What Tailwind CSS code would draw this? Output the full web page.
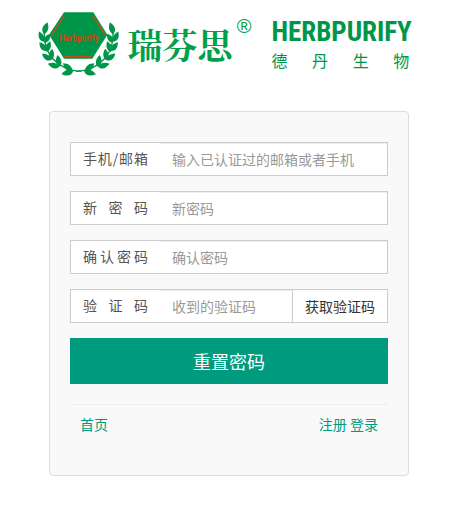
<!DOCTYPE html>
<html lang="zh-CN">
<head>
<meta charset="utf-8">
<meta name="viewport" content="width=device-width, initial-scale=1">
<title>重置密码</title>
<script src="https://cdn.jsdelivr.net/npm/@tailwindcss/browser@4"></script>
</head>
<body class="bg-white font-['Noto_Sans_CJK_SC',sans-serif] text-sm text-[#555]">
<header class="flex items-start justify-center pt-2 pr-1">
  <svg class="h-[68px] w-[82px] shrink-0" viewBox="27 25 246 204" role="img" aria-label="Herbpurify">
    <defs>
      <path id="leaf" d="M0 0C-12-9-11-20 0-34C9-22 10-9 0 0Z"/>
      <g id="branch">
        <path d="M46 98C42 160 85 212 157 215" fill="none" stroke="#00964a" stroke-width="4"/>
        <use href="#leaf" transform="translate(45 104) rotate(16) scale(1.1)"/>
        <use href="#leaf" transform="translate(45 126) rotate(-26)"/>
        <use href="#leaf" transform="translate(47 130) rotate(32) scale(.95)"/>
        <use href="#leaf" transform="translate(53 154) rotate(-40)"/>
        <use href="#leaf" transform="translate(53 157) rotate(18)"/>
        <use href="#leaf" transform="translate(67 181) rotate(-56)"/>
        <use href="#leaf" transform="translate(67 181) rotate(4)"/>
        <use href="#leaf" transform="translate(91 201) rotate(-76) scale(1.05)"/>
        <use href="#leaf" transform="translate(93 201) rotate(-12) scale(1.05)"/>
        <use href="#leaf" transform="translate(133 213) rotate(-107) scale(1.1)"/>
        <use href="#leaf" transform="translate(130 213) rotate(-52) scale(1.05)"/>
      </g>
    </defs>
    <g fill="#00964a">
      <use href="#branch"/>
      <use href="#branch" transform="translate(298 0) scale(-1 1)"/>
      <path d="M105 38H193L235 105L190 177H105L60 105Z"/>
    </g>
    <path d="M106 47L67 108M190 47L229 106M106 170H189" fill="none" stroke="#cf4a12" stroke-width="4"/>
    <text x="150" y="125" text-anchor="middle" fill="#b8501a" font-family="'Roboto Condensed','Liberation Sans Narrow','Liberation Sans',sans-serif" font-weight="700" font-size="28">Herbpurify</text>
  </svg>
  <div class="ml-2 flex items-start text-[#00a04a]">
    <span class="pt-5 font-['Noto_Serif_CJK_SC','Noto_Sans_CJK_SC',serif] text-[35px] leading-8 font-bold">瑞芬思</span>
    <span class="pt-2 pl-1 font-['Liberation_Sans',sans-serif] text-xl leading-5">®</span>
  </div>
  <div class="ml-5 w-[138px] pt-2 text-[#00964a]">
    <div class="font-['Liberation_Sans_Narrow','Roboto_Condensed','Liberation_Sans',sans-serif] text-[27px] leading-8 font-bold">HERBPURIFY</div>
    <div class="flex justify-between text-base leading-6"><span>德</span><span>丹</span><span>生</span><span>物</span></div>
  </div>
</header>
<main class="pt-[35px] pl-[7px]">
  <form class="mx-auto max-w-[360px] rounded border border-[#ddd] bg-[#f9f9f9] px-5 pt-[30px] pb-[41px]">
    <div class="flex flex-col gap-[15px]">
      <div class="flex h-[34px] border border-[#ccc] bg-white">
        <label for="account" class="w-[89px] shrink-0 px-3 leading-[30px] [text-align-last:justify]">手机/邮箱</label>
        <input id="account" type="text" placeholder="输入已认证过的邮箱或者手机" class="min-w-0 flex-1 px-3 shadow-[inset_0_1px_1px_rgba(0,0,0,0.075)] outline-none placeholder:text-[#999]">
      </div>
      <div class="flex h-[34px] border border-[#ccc] bg-white">
        <label for="password" class="w-[89px] shrink-0 px-3 leading-[30px] [text-align-last:justify]">新 密 码</label>
        <input id="password" type="password" placeholder="新密码" class="min-w-0 flex-1 px-3 shadow-[inset_0_1px_1px_rgba(0,0,0,0.075)] outline-none placeholder:text-[#999]">
      </div>
      <div class="flex h-[34px] border border-[#ccc] bg-white">
        <label for="confirm" class="w-[89px] shrink-0 px-3 leading-[30px] [text-align-last:justify]">确认密码</label>
        <input id="confirm" type="password" placeholder="确认密码" class="min-w-0 flex-1 px-3 shadow-[inset_0_1px_1px_rgba(0,0,0,0.075)] outline-none placeholder:text-[#999]">
      </div>
      <div class="flex h-[34px] border border-[#ccc] bg-white">
        <label for="code" class="w-[89px] shrink-0 px-3 leading-[30px] [text-align-last:justify]">验 证 码</label>
        <input id="code" type="text" placeholder="收到的验证码" class="min-w-0 flex-1 px-3 shadow-[inset_0_1px_1px_rgba(0,0,0,0.075)] outline-none placeholder:text-[#999]">
        <button type="button" class="shrink-0 border-l border-[#ccc] px-3 text-[#333]">获取验证码</button>
      </div>
      <button type="submit" class="h-[46px] w-full bg-[#009a7e] text-lg text-white">重置密码</button>
    </div>
    <hr class="mt-5 border-[#eee]">
    <nav class="flex justify-between px-[10px] pt-[9px] leading-5 text-[#009a7e]">
      <a href="#">首页</a>
      <span><a href="#">注册</a> <a href="#">登录</a></span>
    </nav>
  </form>
</main>
</body>
</html>
